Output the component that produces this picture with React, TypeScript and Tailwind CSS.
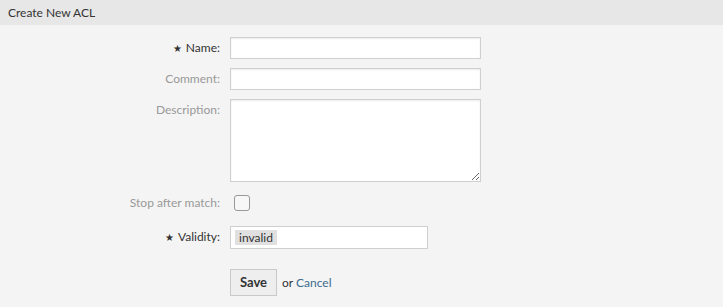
export default function App() {
  const labelCls = "w-[230px] shrink-0 pr-[10px] text-right text-[12px] leading-[22px]";
  const inputCls =
    "h-[22px] w-[251px] border border-[#cfcfcf] bg-white shadow-[inset_0_1px_2px_rgba(0,0,0,0.08)]";

  return (
    <div
      className="min-h-[307px] w-[723px] bg-[#f4f4f4] text-[#333]"
      style={{ fontFamily: "Lato, 'Open Sans', sans-serif" }}
    >
      <div className="flex h-[25px] items-center bg-[#e7e7e7] px-[8px] text-[12px] text-[#333]">
        Create New ACL
      </div>

      <form className="flex flex-col pt-[12px]">
        <div className="flex items-start">
          <label className={`${labelCls} text-[#333]`}>
            <span className="mr-[4px] text-[10px]">★</span>Name:
          </label>
          <input type="text" className={inputCls} />
        </div>

        <div className="mt-[9px] flex items-start">
          <label className={`${labelCls} text-[#999]`}>Comment:</label>
          <input type="text" className={inputCls} />
        </div>

        <div className="mt-[9px] flex items-start">
          <label className={`${labelCls} text-[#999]`}>Description:</label>
          <textarea className="h-[83px] w-[251px] resize border border-[#cfcfcf] bg-white shadow-[inset_0_1px_2px_rgba(0,0,0,0.08)]" />
        </div>

        <div className="mt-[10px] flex items-center">
          <label className={`${labelCls} text-[#999]`}>Stop after match:</label>
          <span className="ml-[4px] h-[16px] w-[16px] rounded-[3px] border border-[#999] bg-[#f7f7f7]" />
        </div>

        <div className="mt-[12px] flex items-start">
          <label className={`${labelCls} text-[#333]`}>
            <span className="mr-[4px] text-[10px]">★</span>Validity:
          </label>
          <div className="flex h-[23px] w-[198px] items-center border border-[#cfcfcf] bg-white pl-[4px]">
            <span className="bg-[#e0e0e0] px-[4px] text-[12px] leading-[15px] text-[#333]">
              invalid
            </span>
          </div>
        </div>

        <div className="mt-[20px] flex items-center">
          <div className="w-[230px] shrink-0" />
          <button
            type="button"
            className="h-[27px] w-[47px] border border-[#c9c9c9] bg-[#eeeeee] text-[13px] font-bold text-[#333]"
          >
            Save
          </button>
          <span className="ml-[5px] text-[12px] text-[#333]">
            or <a className="text-[#3b6b8f]">Cancel</a>
          </span>
        </div>
      </form>
    </div>
  );
}
